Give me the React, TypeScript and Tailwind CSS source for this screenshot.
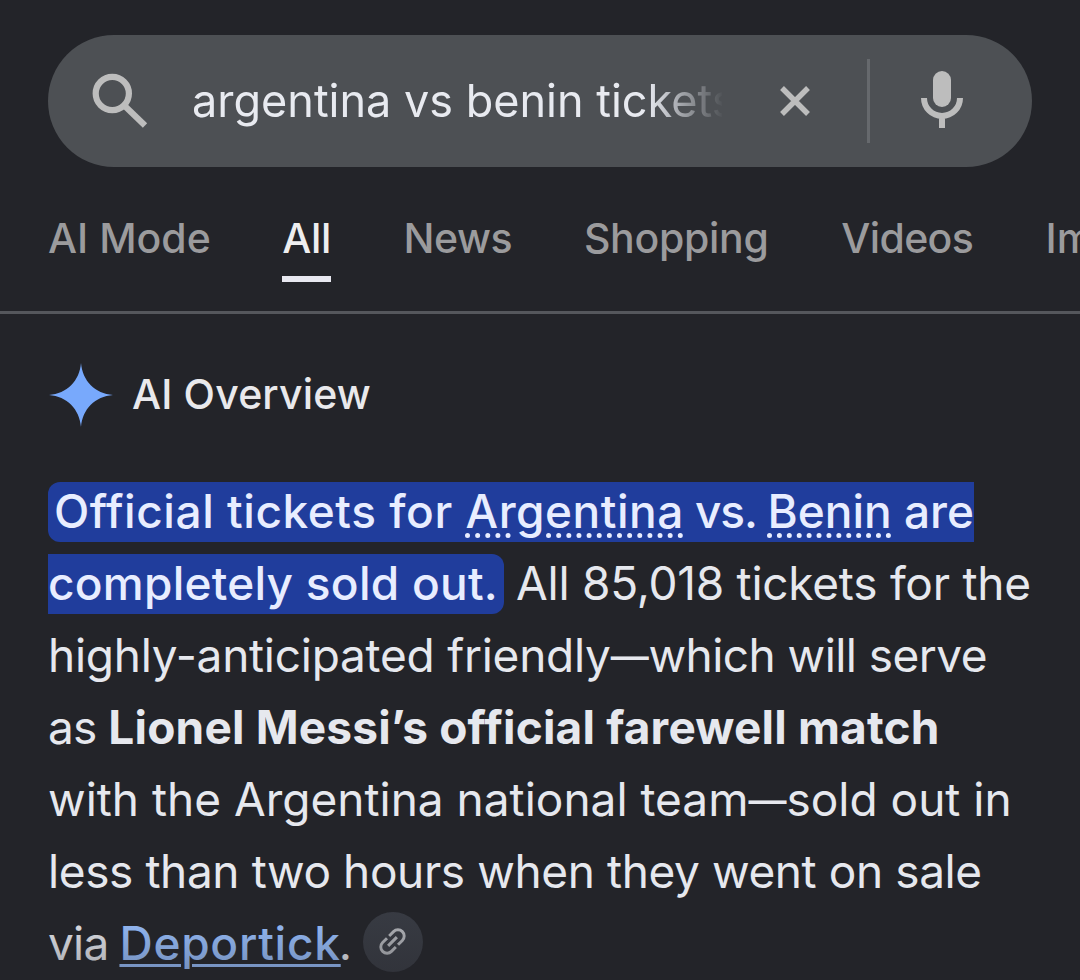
const tabs = [
    { label: "AI Mode", className: "w-[162px]" },
    { label: "All", className: "w-[49px] tracking-[-0.4px]", active: true },
    { label: "News", className: "w-[108px] tracking-[-0.5px]" },
    { label: "Shopping", className: "w-[185px] tracking-[-0.3px]" },
    { label: "Videos", className: "w-[132px] tracking-[-0.6px]" },
    { label: "Images", className: "w-[150px]" },
];

function SearchBar() {
    return (
        <div className="mx-12 flex h-[132px] items-center rounded-full bg-[#4d5054] text-[#bdbdbd]">
            <svg className="ml-[42px] h-[60px] w-[60px] shrink-0" viewBox="0 0 60 60" fill="none" stroke="currentColor" strokeWidth="6.2">
                <circle cx="22.3" cy="22.5" r="16.6" />
                <path d="M34 34.3L55 54.5" />
            </svg>
            <div className="ml-[42px] w-[530px] overflow-hidden whitespace-nowrap text-[45px] leading-[64px] text-[#e8eaf0] [mask-image:linear-gradient(to_right,#000_455px,transparent_532px)]">
                argentina vs benin tickets
            </div>
            <svg className="ml-[56px] h-[34px] w-[34px] shrink-0" viewBox="0 0 34 34" fill="none" stroke="currentColor" strokeWidth="5.4">
                <path d="M4 4L30 30M30 4L4 30" />
            </svg>
            <div className="ml-[55px] h-[84px] w-[3px] shrink-0 bg-[#66696d]" />
            <svg className="ml-[42px] h-[60px] w-[60px] shrink-0" viewBox="0 0 60 60" fill="none" stroke="currentColor" strokeWidth="6">
                <rect x="21" y="0" width="18" height="36" rx="9" fill="currentColor" stroke="none" />
                <path d="M12 27a18 18 0 0 0 36 0M30 44v13" />
            </svg>
        </div>
    );
}

function Tabs() {
    return (
        <nav className="mt-[41px] flex h-[106px] gap-[72.3px] overflow-hidden border-b-[3px] border-[#55575c] pl-12 text-[41px] font-medium text-[#9b9b9d]">
            {tabs.map((tab) => (
                <div key={tab.label} className={`shrink-0 whitespace-nowrap leading-[60px] ${tab.className} ${tab.active ? "text-[#eeeeef]" : ""}`}>
                    {tab.label}
                    {tab.active && <div className="mt-2 h-1.5 bg-[#e8e8f0]" />}
                </div>
            ))}
        </nav>
    );
}

function Dash() {
    return <span className="align-[2px] text-[38px] font-medium leading-none">—</span>;
}

export default function App() {
    return (
        <div className="relative h-[980px] w-[1080px] overflow-hidden bg-[#232429] pt-[35px] font-['Inter',sans-serif]">
            <SearchBar />
            <Tabs />

            <div className="ml-[49px] mt-[49px] flex h-16 items-center">
                <svg className="h-16 w-16" viewBox="0 0 64 64" fill="#78a9fc">
                    <path d="M32 0C33.5 18 46 30.5 64 32C46 33.5 33.5 46 32 64C30.5 46 18 33.5 0 32C18 30.5 30.5 18 32 0Z" />
                </svg>
                <h2 className="ml-[19px] text-[41px] font-medium tracking-[0.15px] text-[#e9e9ec]">AI Overview</h2>
            </div>

            <div className="mt-12 whitespace-nowrap pl-12 text-[46px] leading-[72px] text-[#e6e8ee]">
                <div>
                    <span className="rounded-l-xl bg-[#203d9c] pb-[3px] pl-1.5 pt-px font-medium text-[#e8edff]">
                        <span className="tracking-[0.55px]">Official tickets for </span>
                        <span className="tracking-[0.5px] underline decoration-dotted decoration-[5px] underline-offset-[5px]">Argentina</span>
                        <span className="tracking-[-1.1px]"> vs. </span>
                        <span className="underline decoration-dotted decoration-[5px] underline-offset-[5px]">Benin</span>
                        <span> are</span>
                    </span>
                </div>
                <div>
                    <span className="rounded-r-xl bg-[#203d9c] pb-[3px] pr-1.5 pt-px font-medium tracking-[0.25px] text-[#e8edff]">completely sold out.</span>
                    <span className="ml-3 tracking-[-0.25px]">All 85,018 tickets for the</span>
                </div>
                <div className="tracking-[-0.25px]">
                    highly-anticipated friendly<Dash /><span className="tracking-[-0.55px]">which will serve</span>
                </div>
                <div>
                    <span className="tracking-[-0.9px]">as </span>
                    <b className="font-bold tracking-[0.18px]">Lionel Messi’s official farewell match</b>
                </div>
                <div>with the Argentina national team<Dash />sold out in</div>
                <div className="tracking-[-0.4px]">less than two hours when they went on sale</div>
                <div className="flex items-center">
                    <span className="tracking-[-0.8px]">via</span>
                    <a className="ml-[11px] font-medium tracking-[0.75px] text-[#99c0ff] underline decoration-[3px] underline-offset-[4px]">Deportick</a>
                    <span className="-ml-0.5">.</span>
                    <span className="-mt-[3px] ml-[11px] flex size-[60px] items-center justify-center rounded-full bg-[#383b43]">
                        <svg className="size-[37px] -rotate-45" viewBox="0 0 24 24" fill="#b4b6bb">
                            <path d="M3.9 12c0-1.71 1.39-3.1 3.1-3.1h4V7H7a5 5 0 0 0 0 10h4v-1.9H7c-1.71 0-3.1-1.39-3.1-3.1zM8 13h8v-2H8v2zm9-6h-4v1.9h4a3.1 3.1 0 0 1 0 6.2h-4V17h4a5 5 0 0 0 0-10z" />
                        </svg>
                    </span>
                </div>
            </div>

            {/* Fade over the collapsed end of the answer */}
            <div className="absolute inset-x-0 bottom-0 h-[72px] bg-gradient-to-b from-[#232429]/0 to-[#232429]/35" />
        </div>
    );
}
